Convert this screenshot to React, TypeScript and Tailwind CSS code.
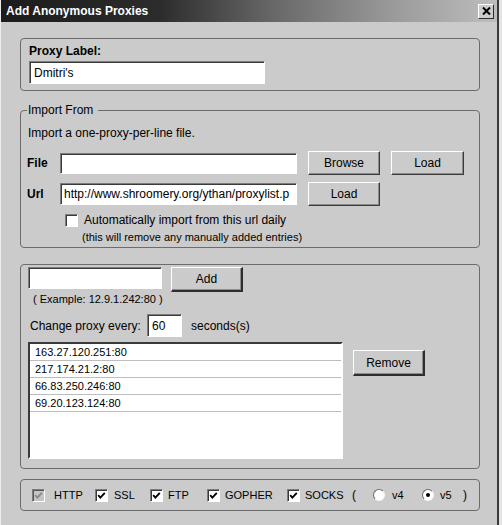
import React from "react";

const btn =
  "h-[24px] bg-[#cbcbcb] border border-t-white border-l-white border-r-[#3a3a3a] border-b-[#3a3a3a] shadow-[inset_-1px_-1px_0_#8c8c8c] text-[12px] text-black flex items-center justify-center leading-none";
const btnDef =
  "bg-[#cbcbcb] border border-t-white border-l-white border-r-[#2e2e2e] border-b-[#2e2e2e] border-r-2 border-b-2 shadow-[inset_-1px_-1px_0_#8c8c8c] text-[12px] text-black flex items-center justify-center leading-none";
const input =
  "bg-white border border-t-[#7c7c7c] border-l-[#7c7c7c] border-r-white border-b-white shadow-[inset_1px_1px_0_#3a3a3a] text-[12px] text-black flex items-center px-[4px] overflow-hidden whitespace-nowrap";
const group = "border border-[#6c6c6c] rounded-[4px]";

function Check({ checked = true, disabled = false }: { checked?: boolean; disabled?: boolean }) {
  return (
    <div
      className={
        disabled
          ? "w-[13px] h-[13px] shrink-0 bg-[#c4c4c4] border border-t-[#7c7c7c] border-l-[#7c7c7c] border-r-white border-b-white shadow-[inset_1px_1px_0_#555555] flex items-center justify-center"
          : "w-[13px] h-[13px] shrink-0 bg-white border border-t-[#7c7c7c] border-l-[#7c7c7c] border-r-white border-b-white shadow-[inset_1px_1px_0_#3a3a3a] flex items-center justify-center"
      }
    >
      {checked && (
        <svg width="9" height="9" viewBox="0 0 9 9">
          <path
            d="M1.2 4.2 L3.4 6.6 L7.8 1.8"
            fill="none"
            stroke={disabled ? "#8a8a8a" : "#000"}
            strokeWidth="1.9"
          />
        </svg>
      )}
    </div>
  );
}

function Radio({ on = false }: { on?: boolean }) {
  return (
    <div className="w-[12px] h-[12px] shrink-0 rounded-full bg-white border border-t-[#6a6a6a] border-l-[#6a6a6a] border-r-[#f4f4f4] border-b-[#f4f4f4] flex items-center justify-center">
      {on && <div className="w-[4px] h-[4px] rounded-full bg-black" />}
    </div>
  );
}

export default function App() {
  const proxies = ["163.27.120.251:80", "217.174.21.2:80", "66.83.250.246:80", "69.20.123.124:80"];
  return (
    <div className="w-[502px] h-[525px] bg-[#e4e4e4] font-['Liberation_Sans',Arial,sans-serif] text-black">
      <div className="w-[499px] h-[525px] bg-[#cbcbcb] border-l border-l-[#ececec] border-r-2 border-r-[#3a3a3a] flex flex-col">
        {/* Title bar */}
        <div className="h-[22px] shrink-0 flex items-center justify-between pl-[5px] pr-[3px] bg-[linear-gradient(to_right,#1c1c1c_0%,#2c2c2c_32%,#686868_55%,#9c9c9c_80%,#bdbdbd_100%)]">
          <span className="text-white font-bold text-[12px] leading-none">Add Anonymous Proxies</span>
          <div className="w-[16px] h-[15px] bg-[#cbcbcb] border border-t-white border-l-white border-r-[#2e2e2e] border-b-[#2e2e2e] flex items-center justify-center">
            <svg width="9" height="8" viewBox="0 0 9 8">
              <path d="M1 0.5 L8 7.5 M8 0.5 L1 7.5" stroke="#000" strokeWidth="2" fill="none" />
            </svg>
          </div>
        </div>

        <div className="flex flex-col pl-[19px] pt-[16px]">
          {/* Proxy label */}
          <div className={group + " w-[460px] h-[53px] flex flex-col pt-[5px] pl-[8px]"}>
            <span className="text-[12px] font-bold leading-[14px]">Proxy Label:</span>
            <div className={input + " mt-[3px] w-[236px] h-[23px]"}>Dmitri's</div>
          </div>

          {/* Import From */}
          <fieldset className={group + " w-[460px] mt-[12px] pl-[6px] pb-[4px] flex flex-col"}>
            <legend className="text-[12px] leading-[14px] pl-[1px] pr-[5px]">Import From</legend>
            <span className="text-[12px] leading-[14px] mt-[9px] pl-[1px]">Import a one-proxy-per-line file.</span>
            <div className="flex items-center mt-[11px] h-[24px]">
              <span className="w-[33px] text-[12px] font-bold">File</span>
              <div className={input + " w-[237px] h-[21px]"}></div>
              <div className={btn + " ml-[11px] w-[72px]"}>Browse</div>
              <div className={btn + " ml-[11px] w-[73px]"}>Load</div>
            </div>
            <div className="flex items-center mt-[7px] h-[24px]">
              <span className="w-[33px] text-[12px] font-bold">Url</span>
              <div className={input + " w-[237px] h-[22px] pl-[3px]"}>http://www.shroomery.org/ythan/proxylist.p</div>
              <div className={btn + " ml-[11px] w-[72px]"}>Load</div>
            </div>
            <div className="flex items-center mt-[7px] h-[14px] pl-[38px] gap-[6px]">
              <Check checked={false} />
              <span className="text-[12px] leading-[14px]">Automatically import from this url daily</span>
            </div>
            <span className="text-[11px] leading-[12px] mt-[4px] pl-[55px]">(this will remove any manually added entries)</span>
          </fieldset>

          {/* Proxy list */}
          <div className={group + " w-[460px] mt-[16px] pt-[2px] pl-[7px] pb-[9px] flex flex-col"}>
            <div className="flex items-start h-[25px]">
              <div className={input + " w-[134px] h-[22px]"}></div>
              <div className={btnDef + " ml-[9px] w-[72px] h-[25px]"}>Add</div>
            </div>
            <span className="text-[11px] leading-[12px] mt-[1px] pl-[5px]">( Example: 12.9.1.242:80 )</span>
            <div className="flex items-center mt-[9px] h-[23px] pl-[2px]">
              <span className="text-[12px] w-[117px]">Change proxy every:</span>
              <div className={input + " w-[35px] h-[23px]"}>60</div>
              <span className="text-[12px] ml-[9px]">seconds(s)</span>
            </div>
            <div className="flex items-start mt-[5px]">
              <div className="w-[315px] h-[117px] bg-white border-2 border-t-[#3a3a3a] border-l-[#3a3a3a] border-r-white border-b-white flex flex-col">
                {proxies.map((p) => (
                  <div key={p} className="h-[17px] shrink-0 border-b border-[#bdbdbd] text-[11px] leading-[16px] pl-[5px]">
                    {p}
                  </div>
                ))}
              </div>
              <div className={btnDef + " ml-[10px] mt-[8px] w-[72px] h-[26px]"}>Remove</div>
            </div>
          </div>

          {/* Protocols */}
          <div className={group + " w-[460px] h-[32px] mt-[10px] pl-[11px] flex items-center text-[11px]"}>
            <div className="w-[63px] flex items-center gap-[9px]">
              <Check disabled />
              <span>HTTP</span>
            </div>
            <div className="w-[55px] flex items-center gap-[6px]">
              <Check />
              <span>SSL</span>
            </div>
            <div className="w-[57px] flex items-center gap-[5px]">
              <Check />
              <span>FTP</span>
            </div>
            <div className="w-[80px] flex items-center gap-[5px]">
              <Check />
              <span>GOPHER</span>
            </div>
            <div className="w-[65px] flex items-center gap-[5px]">
              <Check />
              <span>SOCKS</span>
            </div>
            <div className="w-[21px] text-[12px]">(</div>
            <div className="w-[49px] flex items-center gap-[7px]">
              <Radio />
              <span>v4</span>
            </div>
            <div className="w-[41px] flex items-center gap-[6px]">
              <Radio on />
              <span>v5</span>
            </div>
            <div className="text-[12px]">)</div>
          </div>
        </div>
      </div>
    </div>
  );
}
